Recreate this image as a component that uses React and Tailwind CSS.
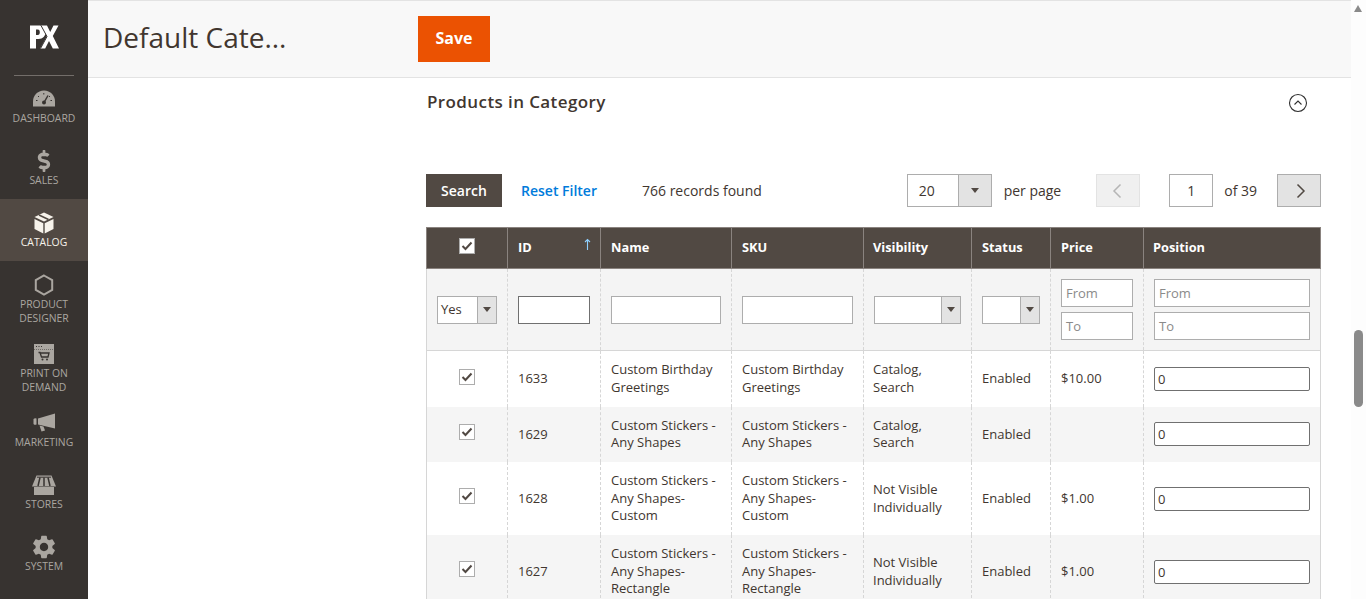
import React from "react";
import { FaDollarSign } from "react-icons/fa";
import { MdSettings } from "react-icons/md";

const Logo = () => (
  <svg width="29" height="24" viewBox="0 0 29 24">
    <path fill="#fff" fillRule="evenodd" d="M0 0.500h8.500c4.500 0 7 2.500 7 6.500s-2.500 7-7 7H6V23.500H0zM6 4.500v5.500h1.800c1.500 0 2-1.200 2-2.700s-.5-2.800-2-2.800z" />
    <path fill="#fff" d="M11 0.500h6l3.200 6.500L23.500 0.500h5L22.800 11l6.200 12.500h-6.200L19 16l-3.800 7.500h-5L16.800 11.500z" />
    <path d="M10.500 23.500L17 11.500 11 0.500" fill="none" stroke="#373330" strokeWidth="1" />
  </svg>
);
const Gauge = () => (
  <svg width="24" height="17" viewBox="0 0 24 17"><path fill="#aaa6a0" d="M12 0.500C5.500 0.500 1 5.500 1 11.500V16.500h22v-5C23 5.500 18.500 0.500 12 0.500z"/><circle cx="12" cy="12.500" r="2" fill="#373330"/><path d="M12 12.500l4-7" stroke="#373330" strokeWidth="1.500"/><path d="M4 10.500h1.500M6 6l1 1M11.800 3v1.500M18 6l-1 1M18.500 10.500H20" stroke="#373330" strokeWidth="1"/></svg>
);
const Box = () => (
  <svg width="20" height="22" viewBox="0 0 20 22"><path fill="#f7f3eb" d="M10 0.500l9.500 4.500-9.500 4.500L0.500 5z"/><path fill="#f7f3eb" d="M0.500 7l8.800 4.200V21.500L0.500 17zM19.500 7l-8.800 4.200V21.500L19.500 17z"/><path d="M5 3l9.500 4.500" stroke="#514943" strokeWidth="1.500"/></svg>
);
const Hex = () => (
  <svg width="20" height="22" viewBox="0 0 20 22"><path fill="none" stroke="#aaa6a0" strokeWidth="2" d="M10 1.500l8.200 4.700v9.600L10 20.500l-8.200-4.700V6.200z"/></svg>
);
const Pod = () => (
  <svg width="20" height="20" viewBox="0 0 20 20"><rect width="20" height="20" fill="#aaa6a0"/><path d="M0 5.500h20" stroke="#6f6b66" strokeWidth="1" strokeDasharray="1 1"/><path d="M2 2.500h1M4.500 2.500h1M7 2.500h1" stroke="#373330"/><path d="M6 9h9l-1 4H7.500L6 8.500H4.500" fill="none" stroke="#373330" strokeWidth="1.300"/><circle cx="8.500" cy="15.500" r="1" fill="#373330"/><circle cx="13" cy="15.500" r="1" fill="#373330"/></svg>
);
const Horn = () => (
  <svg width="22" height="19" viewBox="0 0 22 19"><path fill="#aaa6a0" d="M5 5.500L22 0.500V15.500L5 11.500z"/><path fill="#aaa6a0" d="M0.500 6a2.500 2.500 0 0 1 3-.5V11.500a2.500 2.500 0 0 1-3-.5z"/><path fill="#aaa6a0" d="M6.500 12.500l4 1 1.500 4-3.500 1z"/></svg>
);
const Store = () => (
  <svg width="24" height="20" viewBox="0 0 24 20"><path fill="#aaa6a0" d="M2 12h20v8H2z"/><path fill="#aaa6a0" d="M4.500 0.500h15L24 11.500H0z"/><path d="M8 2.500L6 11M12 2.500V11M16 2.500l2 8.500" stroke="#373330" strokeWidth="1.500"/><path d="M5 2.200h14" stroke="#373330" strokeWidth="1"/></svg>
);

const nav = [
  { h: "h-[62px]", icon: <Gauge />, label: ["DASHBOARD"] },
  { h: "h-[62px]", icon: <FaDollarSign size={22} color="#aaa6a0" />, label: ["SALES"] },
  { h: "h-[62px]", icon: <Box />, label: ["CATALOG"], active: true },
  { h: "h-[69px]", icon: <Hex />, label: ["PRODUCT", "DESIGNER"] },
  { h: "h-[69px]", icon: <Pod />, label: ["PRINT ON", "DEMAND"] },
  { h: "h-[62px]", icon: <Horn />, label: ["MARKETING"] },
  { h: "h-[62px]", icon: <Store />, label: ["STORES"] },
  { h: "h-[62px]", icon: <MdSettings size={28} color="#aaa6a0" />, label: ["SYSTEM"] },
];

const Caret = () => <span className="w-0 h-0 border-l-[4px] border-r-[4px] border-t-[5px] border-l-transparent border-r-transparent border-t-[#514943]" />;

const Select = ({ w, text }) => (
  <div className={`flex items-stretch h-[28px] ${w} border border-[#adadad] bg-white text-[13px] text-[#41362f]`}>
    <span className="flex-1 pl-[3px] leading-[24px]">{text}</span>
    <span className="w-[19px] bg-[#e3e3e3] border-l border-[#adadad] flex items-center justify-center"><Caret /></span>
  </div>
);
const Input = ({ ph, dark }) => (
  <div className={`h-[28px] w-full border ${dark ? "border-[#707070]" : "border-[#adadad]"} bg-white px-[4px] text-[13px] leading-[26px] text-[#8a8a8a]`}>{ph}</div>
);
const Check = () => (
  <span className="inline-flex w-[16px] h-[16px] items-center justify-center border border-[#adadad] bg-white align-middle">
    <svg width="12" height="10" viewBox="0 0 12 10"><path d="M1.500 5l3 3 6-6.500" fill="none" stroke="#514943" strokeWidth="2"/></svg>
  </span>
);

const rows = [
  { h: "h-[56px]", id: "1633", name: ["Custom Birthday", "Greetings"], vis: ["Catalog,", "Search"], price: "$10.00", first: true },
  { h: "h-[55px]", id: "1629", name: ["Custom Stickers -", "Any Shapes"], vis: ["Catalog,", "Search"], price: "", alt: true },
  { h: "h-[73px]", id: "1628", name: ["Custom Stickers -", "Any Shapes-", "Custom"], vis: ["Not Visible", "Individually"], price: "$1.00", low: true },
  { h: "h-[73px]", id: "1627", name: ["Custom Stickers -", "Any Shapes-", "Rectangle"], vis: ["Not Visible", "Individually"], price: "$1.00", alt: true, low: true },
];

const Lines = ({ l, low }) => <>{l.map((t, i) => <div key={i} className={low && i === 1 ? "translate-y-[1px]" : ""}>{t}</div>)}</>;
const Single = ({ first, children }) => <div className={first ? "" : "translate-y-[1px]"}>{children}</div>;
const thBase = "border-l border-[#8a837f] text-[12.800px] font-bold text-white first:border-l-0 pb-[1px]";
const th = `${thBase} px-[10px] text-left`;
const thTight = `${thBase} pl-[9px] pr-[10px] text-left`;
const td = "border-l border-dashed border-[#d6d6d6] px-[10px] align-middle first:border-l-0";
const tdTight = "border-l border-dashed border-[#d6d6d6] pl-[9px] pr-[10px] align-middle";

export default function App() {
  return (
    <div className="flex h-[599px] w-[1366px] overflow-hidden bg-white text-[#41362f] font-['Open_Sans',sans-serif]">
      <aside className="w-[88px] shrink-0 bg-[#373330] flex flex-col">
        <div className="h-[76px] mx-[14px] border-b border-[#736e6a] flex items-center justify-center pb-[1px]">
          <Logo />
        </div>
        <nav className="-mt-[1px]">
          {nav.map((n) => (
            <div key={n.label[0]} className={`${n.h} ${n.active ? "bg-[#514943] text-[#f7f3eb]" : "text-[#aaa6a0]"} flex flex-col items-center pt-[12px]`}>
              <div className="h-[23px] flex items-center justify-center">{n.icon}</div>
              <div className="mt-[1px] text-[10.400px] leading-[14px] text-center">
                <Lines l={n.label} />
              </div>
            </div>
          ))}
        </nav>
      </aside>

      <main className="flex-1 min-w-0 flex flex-col">
        <header className="h-[78px] shrink-0 bg-[#f8f8f8] border-y border-[#e3e3e3] flex items-center">
          <h1 className="w-[330px] pl-[15px] text-[28px] font-normal text-[#41362f] leading-none -translate-y-[2px]">Default Cate...</h1>
          <button className="h-[46px] w-[72px] bg-[#eb5202] text-white text-[16px] font-bold"><span className="block -translate-y-[1px]">Save</span></button>
        </header>
        <section className="flex-1 pl-[338px] pr-[30px]">
          <div className="h-[50px] flex items-center justify-between pr-[1px]">
            <h2 className="pl-[1px] text-[17px] font-semibold text-[#41362f] tracking-[0.4px] -translate-y-[1px]">Products in Category</h2>
            <svg className="mr-[12px]" width="20" height="20" viewBox="0 0 20 20"><circle cx="10" cy="10" r="8.500" fill="none" stroke="#303030" strokeWidth="1.100"/><path d="M6.500 11.500L10 8l3.500 3.500" fill="none" stroke="#303030" strokeWidth="1.100"/></svg>
          </div>
          <div className="h-[33px] mt-[46px] flex items-center text-[14px] text-[#41362f] w-[895px]">
            <button className="h-[33px] w-[76px] bg-[#514943] text-white font-semibold">Search</button>
            <span className="ml-[19px] text-[#007bdb] font-semibold">Reset Filter</span>
            <span className="ml-[45px]">766 records found</span>
            <div className="ml-auto flex items-center">
              <div className="flex w-[85px] h-[33px] border border-[#adadad]">
                <span className="flex-1 pl-[11px] leading-[31px]">20</span>
                <span className="w-[33px] bg-[#e3e3e3] border-l border-[#adadad] flex items-center justify-center"><Caret /></span>
              </div>
              <span className="ml-[12px]">per page</span>
              <span className="ml-[35px] w-[44px] h-[33px] bg-[#f0f0f0] border border-[#e3e3e3] flex items-center justify-center pr-[2px]">
                <svg width="10" height="16" viewBox="0 0 10 16"><path d="M8.500 1.500L2 8l6.500 6.500" fill="none" stroke="#b5b5b5" strokeWidth="1.500"/></svg>
              </span>
              <span className="ml-[29px] w-[44px] h-[33px] border border-[#adadad] text-center leading-[31px]">1</span>
              <span className="ml-[11px]">of 39</span>
              <span className="ml-[20px] w-[44px] h-[33px] bg-[#e3e3e3] border border-[#adadad] flex items-center justify-center pl-[3px]">
                <svg width="10" height="16" viewBox="0 0 10 16"><path d="M1.500 1.500L8 8l-6.500 6.500" fill="none" stroke="#514943" strokeWidth="1.500"/></svg>
              </span>
            </div>
          </div>
          <table className="mt-[20px] w-[894px] table-fixed border-collapse text-[13px] leading-[17.500px] border-x border-[#d6d6d6]">
            <colgroup>
              <col className="w-[81px]" /><col className="w-[93px]" /><col className="w-[131px]" /><col className="w-[132px]" /><col className="w-[108px]" /><col className="w-[79px]" /><col className="w-[93px]" /><col className="w-[177px]" />
            </colgroup>
            <thead>
              <tr className="h-[41px] bg-[#514943] border border-[#8a837f]">
                <th className={`${thBase} text-center`}><span className="-translate-y-[2px] inline-block"><Check /></span></th>
                <th className={`${th} relative`}>ID
                  <svg className="absolute right-[9px] top-[10px]" width="7" height="13" viewBox="0 0 7 13"><path d="M3.500 12V1.500M1 4l2.500-2.500L6 4" fill="none" stroke="#8fd0ff" strokeWidth="1.100"/></svg>
                </th>
                <th className={th}>Name</th>
                <th className={th}>SKU</th>
                <th className={thTight}>Visibility</th>
                <th className={th}>Status</th>
                <th className={th}>Price</th>
                <th className={thTight}>Position</th>
              </tr>
            </thead>
            <tbody>
              <tr className="h-[82px] bg-[#f4f4f4] border-b border-[#d6d6d6]">
                <td className={td}><Select w="w-[60px]" text="Yes" /></td>
                <td className={td}><Input dark /></td>
                <td className={td}><Input /></td>
                <td className={td}><Input /></td>
                <td className={td}><Select w="w-[87px]" text="" /></td>
                <td className={td}><Select w="w-[58px]" text="" /></td>
                <td className={td}><div className="flex flex-col gap-[5px]"><Input ph="From" /><Input ph="To" /></div></td>
                <td className={td}><div className="flex flex-col gap-[5px] w-[156px]"><Input ph="From" /><Input ph="To" /></div></td>
              </tr>
              {rows.map((r) => (
                <tr key={r.id} className={`${r.h} ${r.alt ? "bg-[#f5f5f5]" : "bg-white"}`}>
                  <td className={`${td} text-center`}><span className="-translate-y-[3px] inline-block"><Check /></span></td>
                  <td className={td}><Single first={r.first}>{r.id}</Single></td>
                  <td className={td}><Lines l={r.name} low={r.low} /></td>
                  <td className={td}><Lines l={r.name} low={r.low} /></td>
                  <td className={tdTight}><Lines l={r.vis} low={r.low} /></td>
                  <td className={td}><Single first={r.first}>Enabled</Single></td>
                  <td className={td}><Single first={r.first}>{r.price}</Single></td>
                  <td className={td}><div className={`h-[24px] w-[156px] border border-[#707070] rounded-[2px] bg-white px-[3px] leading-[22px] ${r.low ? "translate-y-[1px]" : ""}`}>0</div></td>
                </tr>
              ))}
            </tbody>
          </table>
        </section>
      </main>

      <div className="relative w-[15px] shrink-0 bg-[#fdfdfd]">
        <span className="absolute left-[3px] top-[5px] w-0 h-0 border-l-[4.500px] border-r-[4.500px] border-b-[7px] border-l-transparent border-r-transparent border-b-[#8a8a8a]" />
        <span className="absolute left-[3px] top-[330px] w-[9px] h-[77px] rounded-full bg-[#8a8a8a]" />
      </div>
    </div>
  );
}
